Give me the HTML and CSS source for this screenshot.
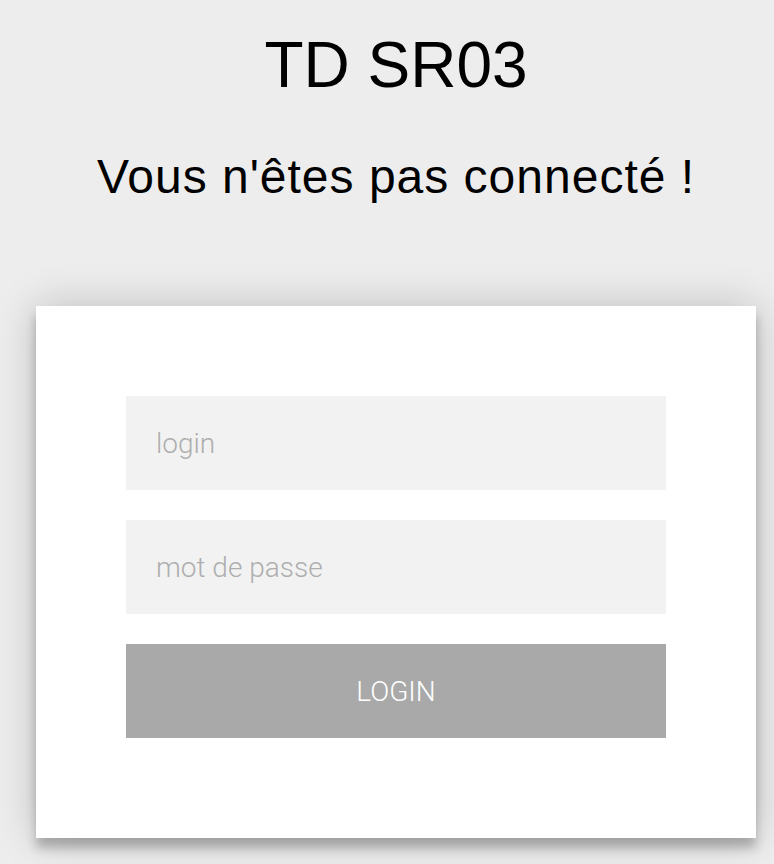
FILE: index.html
```html
<!DOCTYPE html>
<html lang="fr">
<head>
<meta charset="utf-8">
<title>TD SR03</title>
<link rel="stylesheet" href="styles.css">
</head>
<body>
<div class="page">
  <h1 class="title">TD SR03</h1>
  <h2 class="subtitle">Vous n'êtes pas connecté !</h2>
  <div class="card">
    <form class="login-form">
      <input class="field" type="text" placeholder="login">
      <input class="field" type="password" placeholder="mot de passe">
      <button class="btn" type="button">LOGIN</button>
    </form>
  </div>
</div>
</body>
</html>
```

FILE: styles.css
```css
html, body {
  margin: 0;
  padding: 0;
  background: #ededed;
}
body {
  font-family: "Liberation Sans", Arial, sans-serif;
  color: #000;
}
.page {
  padding-left: 18px;
  padding-bottom: 26px;
  display: flex;
  flex-direction: column;
  align-items: center;
}
.title {
  margin: 28px 0 0;
  font-size: 64px;
  line-height: 74px;
  font-weight: 400;
  text-align: center;
}
.subtitle {
  margin: 47px 0 0;
  font-size: 48px;
  line-height: 55px;
  font-weight: 400;
  letter-spacing: 1px;
  text-align: center;
}
.card {
  margin-top: 102px;
  width: 720px;
  box-sizing: border-box;
  background: #fff;
  padding: 90px 90px 100px;
  box-shadow: 0 0 40px 0 rgba(0, 0, 0, 0.2), 0 10px 10px 0 rgba(0, 0, 0, 0.24);
}
.login-form {
  display: flex;
  flex-direction: column;
  gap: 30px;
}
.field {
  display: block;
  width: 100%;
  height: 94px;
  box-sizing: border-box;
  border: 0;
  outline: 0;
  margin: 0;
  padding: 0 30px;
  background: #f2f2f2;
  font-family: Roboto, sans-serif;
  font-weight: 300;
  font-size: 28px;
  color: #333;
}
.field::placeholder {
  color: #aeaeae;
  opacity: 1;
}
.btn {
  display: block;
  width: 100%;
  height: 94px;
  border: 0;
  margin: 0;
  padding: 0;
  background: #a9a9a9;
  color: #fff;
  font-family: Roboto, sans-serif;
  font-weight: 300;
  font-size: 28px;
  text-transform: uppercase;
  cursor: pointer;
}
```
